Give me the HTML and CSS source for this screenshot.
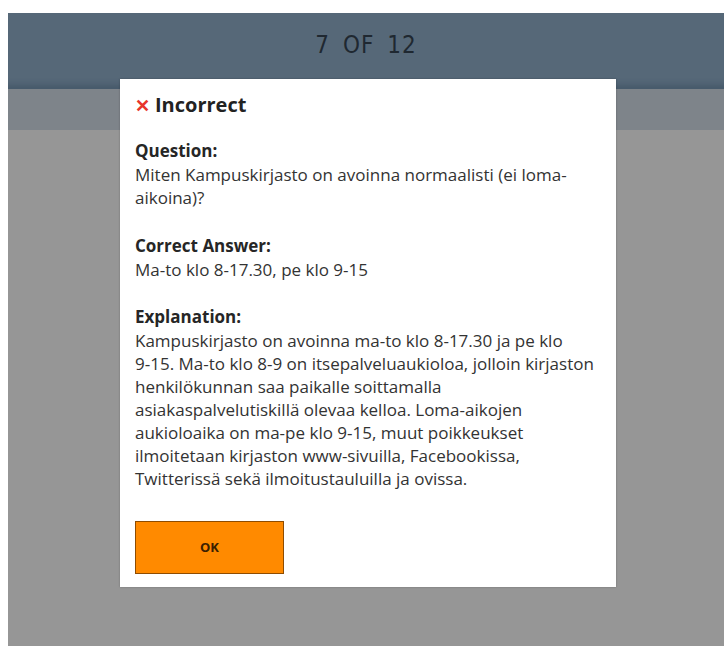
FILE: index.html
```html
<!DOCTYPE html>
<html lang="fi">
<head>
<meta charset="utf-8">
<title>Quiz</title>
<link rel="stylesheet" href="styles.css">
</head>
<body>
<div class="app">
  <header class="topbar">
    <span class="progress">7 OF 12</span>
  </header>
  <div class="subbar"></div>
  <main class="stage"></main>

  <div class="dialog" role="dialog">
    <h2 class="result"><span class="cross">✕</span>Incorrect</h2>

    <section class="block">
      <div class="label">Question:</div>
      <div class="text">Miten Kampuskirjasto on avoinna normaalisti (ei loma-aikoina)?</div>
    </section>

    <section class="block">
      <div class="label">Correct Answer:</div>
      <div class="text">Ma-to klo 8-17.30, pe klo 9-15</div>
    </section>

    <section class="block explain">
      <div class="label">Explanation:</div>
      <div class="text">Kampuskirjasto on avoinna ma-to klo 8-17.30 ja pe klo 9&#8209;15. Ma-to klo 8-9 on itsepalveluaukioloa, jolloin kirjaston henkilökunnan saa paikalle soittamalla asiakaspalvelutiskillä olevaa kelloa. Loma-aikojen aukioloaika on ma-pe klo 9&#8209;15, muut poikkeukset ilmoitetaan kirjaston www-sivuilla, Facebookissa, Twitterissä sekä ilmoitustauluilla ja ovissa.</div>
    </section>

    <button class="ok" type="button">OK</button>
  </div>
</div>
</body>
</html>
```

FILE: styles.css
```css
html, body {
  height: 100%;
}

body {
  margin: 0;
  padding: 13px 0 0 8px;
  box-sizing: border-box;
  background: #ffffff;
  font-family: "Open Sans", "Noto Sans", sans-serif;
}

.app {
  position: relative;
  height: 100%;
  display: flex;
  flex-direction: column;
  background: #969696;
}

.topbar {
  height: 76px;
  background: #566878;
  box-shadow: inset 0 -10px 6px -6px rgba(40, 60, 80, 0.35);
  display: flex;
  align-items: center;
  justify-content: center;
}

.progress {
  font-family: "DejaVu Sans", sans-serif;
  font-stretch: condensed;
  font-size: 24px;
  letter-spacing: 1px;
  word-spacing: 5px;
  color: #1f2831;
  margin-top: -12px;
}

.subbar {
  height: 41px;
  background: #7e848a;
}

.stage {
  flex: 1;
  background: #969696;
}

/* answer feedback dialog */
.dialog {
  position: absolute;
  left: 112px;
  top: 66px;
  width: 496px;
  box-sizing: border-box;
  padding: 13px 14px 13px 15px;
  background: #ffffff;
  box-shadow: 0 0 2px rgba(0, 0, 0, 0.25);
  color: #333333;
}

.result {
  margin: 0 0 21px;
  font-size: 20px;
  line-height: 26px;
  font-weight: 700;
  color: #222222;
}

.cross {
  color: #e8352b;
  font-size: 18px;
  margin-right: 5px;
}

.block {
  font-size: 17px;
  line-height: 23.7px;
  margin-bottom: 23.7px;
}

.explain {
  margin-bottom: 31px;
}

.explain .text {
  line-height: 23px;
}

.label {
  font-weight: 700;
  color: #262626;
}

.text {
  color: #333333;
}

.ok {
  display: block;
  width: 149px;
  height: 53px;
  padding: 0;
  background: #ff8a00;
  border: 1px solid #8f4c00;
  font-family: "Open Sans", sans-serif;
  font-weight: 700;
  font-size: 13px;
  color: #3b2000;
  cursor: pointer;
}
```
